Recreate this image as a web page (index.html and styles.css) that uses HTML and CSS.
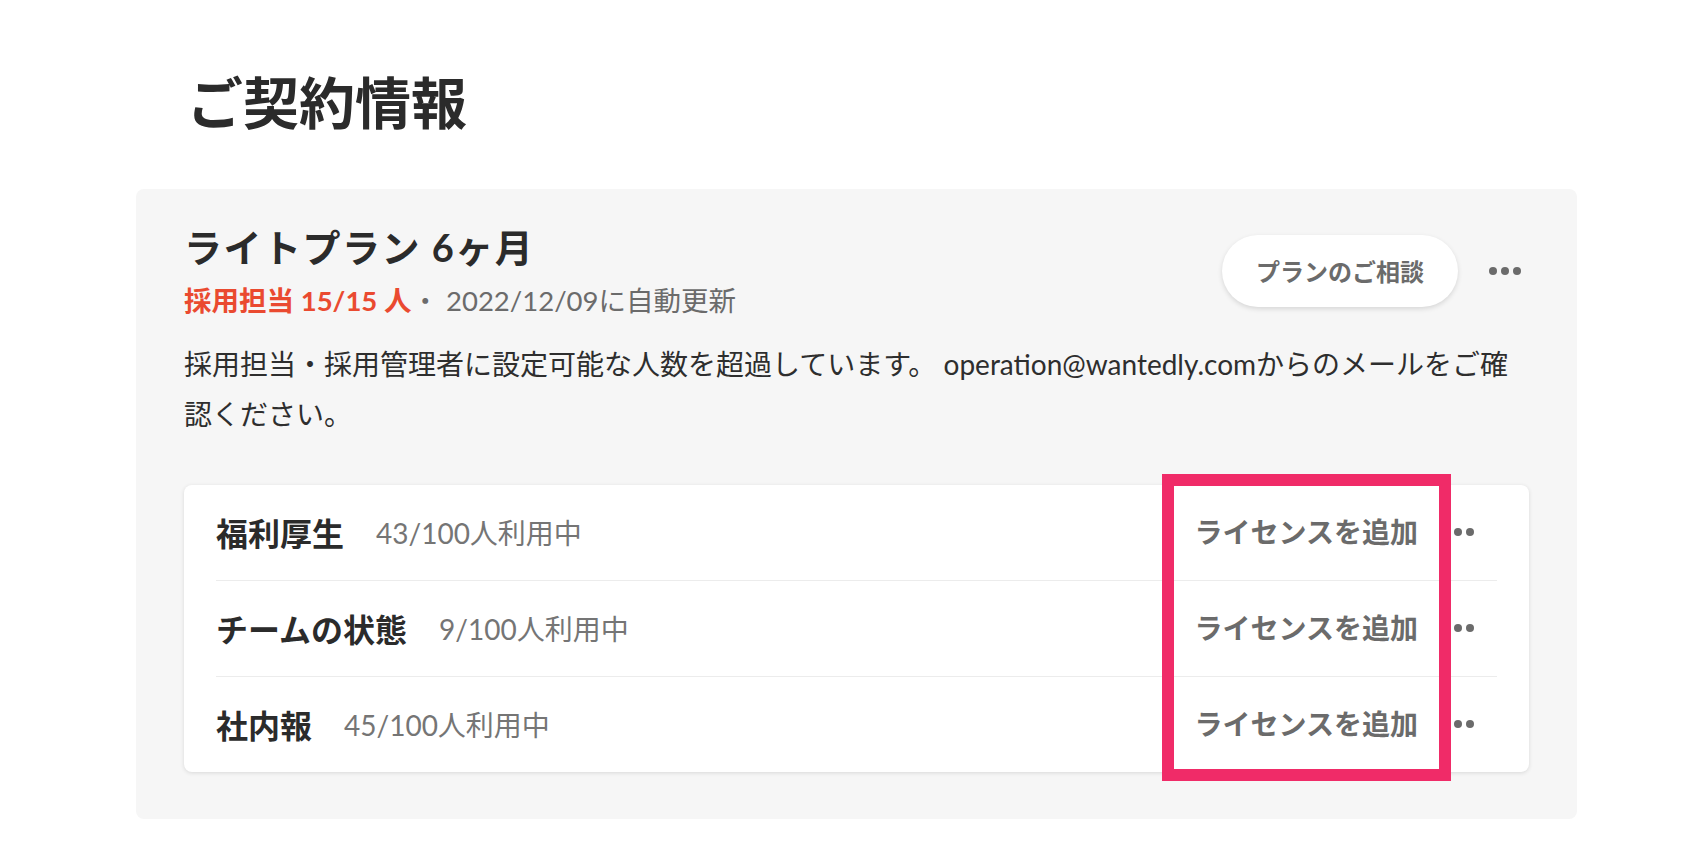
FILE: index.html
```html
<!DOCTYPE html>
<html lang="ja">
<head>
  <meta charset="UTF-8" />
  <meta name="viewport" content="width=device-width, initial-scale=1.0"/>
  <title>ご契約情報</title>
  <link rel="stylesheet" href="styles.css">
</head>
<body>

  <div class="page">
    <h1 class="page-title">ご契約情報</h1>

    <div class="plan">
      <div class="plan-head">
        <div>
          <h2 class="plan-name">ライトプラン 6ヶ月</h2>
          <div class="plan-sub">
            <span class="seats">採用担当 15/15 人</span><span class="renew">・ 2022/12/09に自動更新</span>
          </div>
        </div>
        <div class="plan-actions">
          <button class="consult">プランのご相談</button>
          <button class="more"><i></i><i></i><i></i></button>
        </div>
      </div>

      <p class="notice">採用担当・採用管理者に設定可能な人数を超過しています。 operation@wantedly.comからのメールをご確認ください。</p>

      <div class="licenses">
        <div class="license-row">
          <span class="license-name">福利厚生</span>
          <span class="license-count">43/100人利用中</span>
          <button class="add">ライセンスを追加</button>
          <button class="more row-more"><i></i><i></i><i></i></button>
        </div>
        <div class="license-row">
          <span class="license-name">チームの状態</span>
          <span class="license-count">9/100人利用中</span>
          <button class="add">ライセンスを追加</button>
          <button class="more row-more"><i></i><i></i><i></i></button>
        </div>
        <div class="license-row">
          <span class="license-name">社内報</span>
          <span class="license-count">45/100人利用中</span>
          <button class="add">ライセンスを追加</button>
          <button class="more row-more"><i></i><i></i><i></i></button>
        </div>

        <!-- highlight box around the add buttons -->
        <div class="highlight"></div>
      </div>
    </div>
  </div>

</body>
</html>
```

FILE: styles.css
```css
body {
  margin: 0;
  background-color: #fff;
  color: #2e2e2e;
  font-family: "Lato", "Noto Sans CJK JP", sans-serif;
}

.page {
  width: 1441px;
  margin-left: 136px;
}

.page-title {
  margin: 69px 0 0 51px;
  font-size: 56px;
  line-height: 1.2;
  font-weight: bold;
  color: #2b2b2b;
}

.plan {
  margin-top: 53px;
  background-color: #f6f6f6;
  border-radius: 8px;
  padding: 36px 48px 47px;
}

.plan-head {
  display: flex;
  align-items: center;
  justify-content: space-between;
}

.plan-name {
  margin: 0;
  font-size: 38px;
  line-height: 1.2;
  font-weight: bold;
  letter-spacing: 1.5px;
  color: #2b2b2b;
}

.plan-sub {
  margin-top: 13px;
  font-size: 27.5px;
  line-height: 1.2;
}

.seats {
  color: #ea4a30;
  font-weight: bold;
}

.renew {
  color: #6b6b6b;
}

.plan-actions {
  display: flex;
  align-items: center;
}

button {
  font-family: inherit;
  border: none;
  background: none;
  padding: 0;
  cursor: pointer;
}

.consult {
  height: 72px;
  padding: 0 34px;
  border-radius: 36px;
  background-color: #fff;
  box-shadow: 0 2px 5px rgba(0, 0, 0, 0.13);
  font-size: 24px;
  font-weight: bold;
  color: #6b6b6b;
}

.more {
  width: 48px;
  height: 48px;
  margin-left: 23px;
  display: flex;
  align-items: center;
  justify-content: center;
  gap: 4px;
}

.more i {
  width: 8px;
  height: 8px;
  border-radius: 50%;
  background-color: #6b6b6b;
}

.notice {
  margin: 22px 0 0;
  font-size: 28px;
  line-height: 50px;
  color: #2e2e2e;
}

.licenses {
  position: relative;
  margin-top: 46px;
  padding: 0 32px;
  background-color: #fff;
  border-radius: 8px;
  box-shadow: 0 1px 4px rgba(0, 0, 0, 0.12);
}

.license-row {
  display: flex;
  align-items: center;
  height: 95px;
}

.license-row + .license-row {
  border-top: 1px solid #ececec;
}

.license-name {
  font-size: 32px;
  font-weight: bold;
  color: #2b2b2b;
}

.license-count {
  margin-left: 32px;
  font-size: 28px;
  color: #757575;
}

.add {
  margin-left: auto;
  padding: 0 16px;
  font-size: 28px;
  font-weight: bold;
  color: #6b6b6b;
  line-height: 48px;
}

.row-more {
  margin-left: 0;
  margin-right: 15px;
}

.highlight {
  position: absolute;
  top: -11px;
  right: 78px;
  width: 289px;
  height: 307px;
  box-sizing: border-box;
  border: 12px solid #f02b68;
}
```
